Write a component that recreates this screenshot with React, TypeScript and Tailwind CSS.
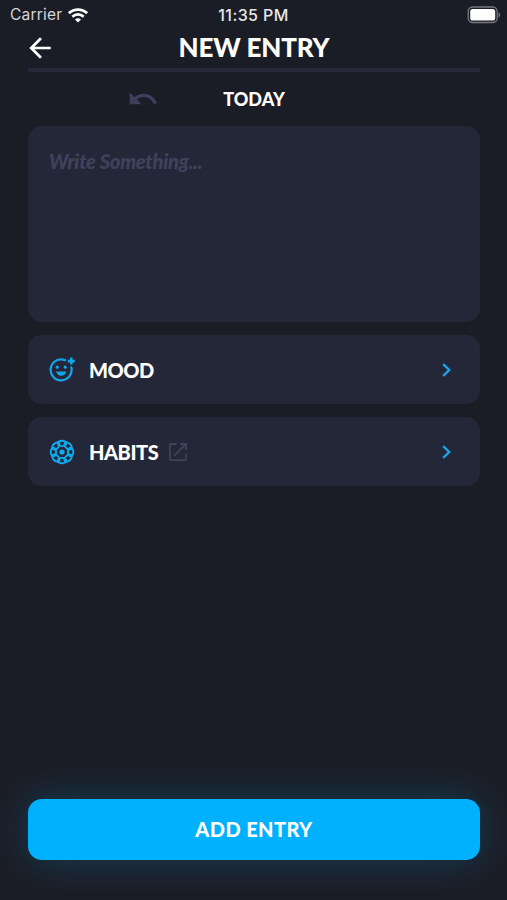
import type { ReactNode } from "react";
import { MdArrowBack, MdUndo } from "react-icons/md";

const petals = [0, 45, 90, 135, 180, 225, 270, 315];

function WifiIcon() {
  return (
    <svg width="20" height="15" viewBox="0 0 20 15" fill="none" stroke="#fff" aria-hidden>
      <path d="M.9 5.2C6 .4 14 .4 19.1 5.2" strokeWidth="2.9" />
      <path d="M4.3 8.7c3.2-3 8.2-3 11.4 0" strokeWidth="2.7" />
      <path d="M7 11.5c1.7-1.6 4.3-1.6 6 0L10 14.5z" fill="#fff" stroke="none" />
    </svg>
  );
}

function BatteryIcon() {
  return (
    <svg width="34" height="18" viewBox="0 0 34 18" aria-hidden>
      <rect x="1.2" y="1" width="29" height="15.5" rx="4.5" fill="none" stroke="#77787d" strokeWidth="1.3" />
      <rect x="3.2" y="3" width="25" height="11.5" rx="2.6" fill="#fff" />
      <path d="M31.6 6.2c2 .8 2 4.4 0 5.2z" fill="#77787d" />
    </svg>
  );
}

function MoodIcon() {
  return (
    <svg width="27" height="26" viewBox="0 0 27 26" fill="none" stroke="#14a5e9" aria-hidden>
      <path d="M16.2 3.2A10.5 10.5 0 1 0 22.3 10.3" strokeWidth="2.2" strokeLinecap="round" />
      <path d="M22.3.6v7M18.8 4.1h7" strokeWidth="2.6" />
      <circle cx="8.2" cy="10.2" r="1.6" fill="#14a5e9" stroke="none" />
      <circle cx="16.2" cy="10.2" r="1.6" fill="#14a5e9" stroke="none" />
      <path d="M7 14.4h10.4c-.8 2.8-2.7 4.4-5.2 4.4s-4.4-1.6-5.2-4.4z" fill="#14a5e9" stroke="none" />
    </svg>
  );
}

function HabitsIcon() {
  return (
    <svg width="26" height="26" viewBox="0 0 26 26" fill="none" stroke="#0eabf5" aria-hidden>
      {petals.map((angle) => (
        <ellipse
          key={angle}
          cx="13"
          cy="4.4"
          rx="4.4"
          ry="2.7"
          strokeWidth="1.9"
          transform={`rotate(${angle} 13 13)`}
        />
      ))}
      <circle cx="13" cy="13" r="2.6" fill="#0eabf5" stroke="none" />
    </svg>
  );
}

function OpenIcon() {
  return (
    <svg width="20" height="20" viewBox="0 0 20 20" fill="none" stroke="#40425a" strokeWidth="1.8" aria-hidden>
      <path d="M8.5 2H2.8a.9.9 0 0 0-.9.9v14.3c0 .5.4.9.9.9h14.3c.5 0 .9-.4.9-.9v-5.7" />
      <path d="M12.2 2H18v5.8M18 2 6.3 13.7" />
    </svg>
  );
}

function Row({ icon, label, extra }: { icon: ReactNode; label: ReactNode; extra?: ReactNode }) {
  return (
    <button className="flex h-[69px] w-full items-center rounded-[14px] bg-[#242738] pl-[21px] pr-[28px]">
      <span className="flex w-[40px]">{icon}</span>
      {label}
      {extra}
      <svg className="ml-auto" width="11" height="16" viewBox="0 0 11 16" fill="none" stroke="#18a5e8" strokeWidth="2.4" aria-hidden>
        <path d="M2.2 2.2 8.2 8l-6 5.8" />
      </svg>
    </button>
  );
}

export default function App() {
  return (
    <div className="flex h-[900px] w-[507px] flex-col overflow-hidden bg-[#1b1d26] font-['Lato',sans-serif] text-white">
      <div className="grid h-[30px] grid-cols-[1fr_auto_1fr] items-center pl-[10px] pr-[6px] font-['Inter',sans-serif] text-[15.5px]">
        <div className="flex items-center gap-[6px] text-[#d5d6d9]">
          <span className="tracking-[0.2px]">Carrier</span>
          <WifiIcon />
        </div>
        <span className="-ml-[4px] text-[16px] font-medium tracking-[0.4px] text-[#e8e8ea]">11:35 PM</span>
        <div className="flex justify-end">
          <BatteryIcon />
        </div>
      </div>

      <header className="ml-[28px] mr-[27px] grid h-[42px] grid-cols-[32px_1fr_32px] items-start border-b-4 border-[#25273b]">
        <MdArrowBack className="-ml-[4px] mt-[2px]" size={32} />
        <h1 className="text-center text-[26px] font-black leading-[34px] tracking-[-0.15px]">NEW ENTRY</h1>
      </header>

      <div className="ml-[28px] mr-[27px] grid h-[54px] grid-cols-[1fr_auto_1fr] items-center">
        <MdUndo className="ml-[99px]" size={32} color="#3e3e5d" />
        <span className="text-[18px] font-black">TODAY</span>
      </div>

      <main className="flex flex-1 flex-col gap-[13px] pl-[28px] pr-[27px]">
        <textarea
          className="h-[196px] resize-none rounded-[14px] bg-[#242738] px-[21px] py-[22px] text-[20px] font-black italic leading-[26px] tracking-[-0.22px] outline-none placeholder:text-[#40425b]"
          placeholder="Write Something..."
        />
        <Row icon={<MoodIcon />} label={<span className="text-[20px] font-black tracking-[-0.5px]">MOOD</span>} />
        <Row
          icon={<HabitsIcon />}
          label={<span className="text-[20px] font-black tracking-[-0.45px]">HABITS</span>}
          extra={<span className="ml-[10px]"><OpenIcon /></span>}
        />
      </main>

      <footer className="pb-[40px] pl-[28px] pr-[27px]">
        <button className="h-[61px] w-full rounded-[14px] bg-[#00b1ff] pb-[2px] text-[20px] font-black tracking-[0.4px] shadow-[0_0_40px_rgba(0,177,255,0.23)]">
          ADD ENTRY
        </button>
      </footer>
    </div>
  );
}
